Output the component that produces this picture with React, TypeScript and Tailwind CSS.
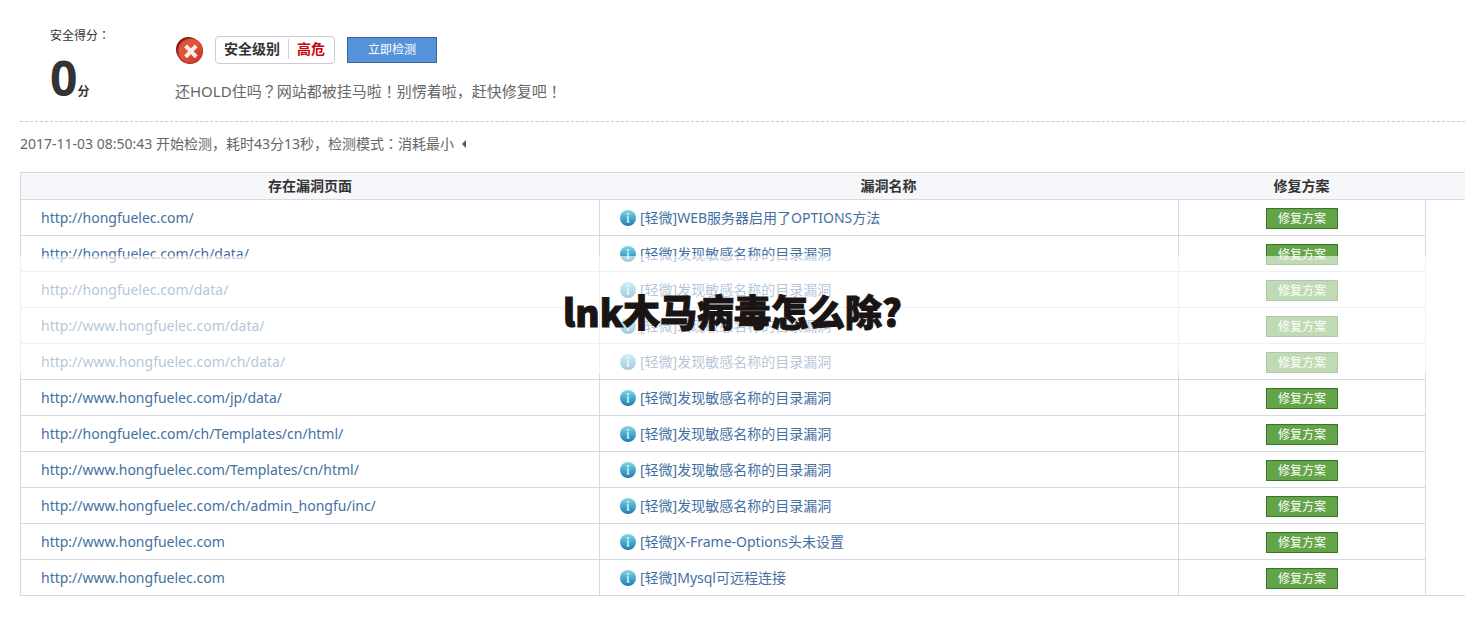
import type { ReactNode } from "react";

type Finding = { url: string; name: string };

const DIR_LEAK = "[轻微]发现敏感名称的目录漏洞";

const findings: Finding[] = [
  { url: "http://hongfuelec.com/", name: "[轻微]WEB服务器启用了OPTIONS方法" },
  { url: "http://hongfuelec.com/ch/data/", name: DIR_LEAK },
  { url: "http://hongfuelec.com/data/", name: DIR_LEAK },
  { url: "http://www.hongfuelec.com/data/", name: DIR_LEAK },
  { url: "http://www.hongfuelec.com/ch/data/", name: DIR_LEAK },
  { url: "http://www.hongfuelec.com/jp/data/", name: DIR_LEAK },
  { url: "http://hongfuelec.com/ch/Templates/cn/html/", name: DIR_LEAK },
  { url: "http://www.hongfuelec.com/Templates/cn/html/", name: DIR_LEAK },
  { url: "http://www.hongfuelec.com/ch/admin_hongfu/inc/", name: DIR_LEAK },
  { url: "http://www.hongfuelec.com", name: "[轻微]X-Frame-Options头未设置" },
  { url: "http://www.hongfuelec.com", name: "[轻微]Mysql可远程连接" },
];

/* Full-width punctuation, centred in the em box. */
function Mark({ children }: { children: ReactNode }) {
  return (
    <span lang="zh-TW" className="font-['Noto_Sans_CJK_TC',sans-serif]">
      {children}
    </span>
  );
}

function DangerIcon() {
  return (
    <svg viewBox="0 0 28 28" className="size-7 shrink-0" aria-hidden="true">
      <defs>
        <linearGradient id="danger" x1="0" y1="0" x2="1" y2="1">
          <stop offset="0" stopColor="#d9503c" />
          <stop offset="0.45" stopColor="#e2553b" />
          <stop offset="1" stopColor="#c2301f" />
        </linearGradient>
      </defs>
      <circle cx="13.4" cy="13.4" r="12.4" fill="#7b1512" />
      <circle cx="15" cy="15" r="13" fill="#a9281c" />
      <circle cx="15.5" cy="15" r="12.2" fill="url(#danger)" />
      <path d="M10.6 9.8 21.2 20.8M21.2 9.8 10.6 20.8" stroke="#fbeeea" strokeWidth="4" />
    </svg>
  );
}

function InfoIcon() {
  return (
    <svg viewBox="0 0 16 16" className="size-4 shrink-0" aria-hidden="true">
      <defs>
        <linearGradient id="info" x1="0" y1="0" x2="0" y2="1">
          <stop offset="0" stopColor="#8ed6e6" />
          <stop offset="0.45" stopColor="#4bb0d2" />
          <stop offset="1" stopColor="#1f78a8" />
        </linearGradient>
      </defs>
      <circle cx="8" cy="8" r="8" fill="url(#info)" />
      <rect x="7.2" y="3.3" width="1.8" height="1.8" fill="#e4f5fa" />
      <path d="M6.6 6.9H8M6.6 12h3" stroke="#e4f5fa" strokeWidth="0.8" fill="none" />
      <rect x="7.3" y="6.5" width="1.5" height="5.9" fill="#e4f5fa" />
    </svg>
  );
}

function Summary() {
  return (
    <section className="ml-5 flex h-[122px] border-b border-dashed border-[#c8c8c8] pl-[30px]">
      <div className="w-[125px] shrink-0 pt-[25px] text-[#333]">
        <p className="text-[12px] leading-5">
          安全得分<Mark>：</Mark>
        </p>
        <p className="mt-1 flex items-baseline leading-[56px]">
          <span className="text-[48px] font-bold">0</span>
          <span className="text-[12px] font-bold">分</span>
        </p>
      </div>
      <div className="pt-9">
        <div className="flex items-center">
          <DangerIcon />
          <div className="ml-3 flex h-7 w-[120px] items-center rounded border border-[#c8ccd4] px-2 pb-0.5 text-[14px] leading-5 font-bold">
            <span className="text-[#333]">安全级别</span>
            <span className="ml-2 border-l border-[#d0d0d8] pl-2 text-[#cc0611]">高危</span>
          </div>
          <button
            type="button"
            className="ml-3 h-[26px] w-[90px] border border-[#3f6491] bg-[#5594da] text-[12px] text-white"
          >
            立即检测
          </button>
        </div>
        <p className="mt-[15px] text-[15px] leading-6 text-[#666]">
          还HOLD住吗<Mark>？</Mark>网站都被挂马啦<Mark>！</Mark>别愣着啦，赶快修复吧
          <Mark>！</Mark>
        </p>
      </div>
    </section>
  );
}

function FindingsTable() {
  return (
    <table className="w-full table-fixed border-separate border-spacing-0 text-[14px]">
      <colgroup>
        <col />
        <col />
        <col className="w-[247px]" />
        <col className="w-10" />
      </colgroup>
      <thead>
        <tr className="h-7 bg-[#f5f7fa] leading-5 text-[#333]">
          <th className="border-y border-l border-[#d6d9e2] p-0">存在漏洞页面</th>
          <th className="border-y border-[#d6d9e2] p-0">漏洞名称</th>
          <th className="border-y border-[#d6d9e2] p-0">修复方案</th>
          <th className="border-y border-[#d6d9e2] p-0" />
        </tr>
      </thead>
      <tbody>
        {findings.map((item, index) => (
          <tr key={index} className="h-9 leading-5 text-[#44709f]">
            <td className="border-b border-l border-[#d6d9e2] py-0 pl-5">
              <a href={item.url}>{item.url}</a>
            </td>
            <td className="border-b border-l border-[#d6d9e2] py-0 pl-5">
              <a href="#detail" className="flex items-center gap-1">
                <InfoIcon />
                <span>{item.name}</span>
              </a>
            </td>
            <td className="border-b border-l border-[#d6d9e2] p-0">
              <button
                type="button"
                className="mx-auto mt-px block h-[21px] w-[72px] border border-[#38752a] bg-[#62a447] text-[12px] leading-5 text-white"
              >
                修复方案
              </button>
            </td>
            {index === 0 && (
              <td rowSpan={findings.length} className="border-b border-l border-[#d6d9e2] p-0" />
            )}
          </tr>
        ))}
      </tbody>
    </table>
  );
}

export default function App() {
  return (
    <main
      lang="zh-CN"
      className="relative min-h-screen overflow-hidden bg-white font-['Noto_Sans','Noto_Sans_CJK_SC',sans-serif]"
    >
      <Summary />
      <div className="pl-5">
        <p className="flex items-center pt-[11px] pb-[18px] text-[14px] leading-5 text-[#666]">
          <span>
            2017-11-03 08:50:43 开始检测，耗时43分13秒，检测模式<Mark>：</Mark>消耗最小
          </span>
          <svg viewBox="0 0 4 8" className="ml-2 h-2 w-1" aria-hidden="true">
            <path d="M4 0v8L0 4z" fill="#555" />
          </svg>
        </p>
        <FindingsTable />
      </div>
      <div className="pointer-events-none absolute inset-x-0 top-64 flex h-[118px] items-center justify-center bg-white/60 pb-2">
        <h1 className="font-['Noto_Sans_CJK_SC',sans-serif] text-[37px] leading-[48px] font-black text-[#1a1414] [-webkit-text-stroke:1px_#1a1414]">
          lnk木马病毒怎么除?
        </h1>
      </div>
    </main>
  );
}
